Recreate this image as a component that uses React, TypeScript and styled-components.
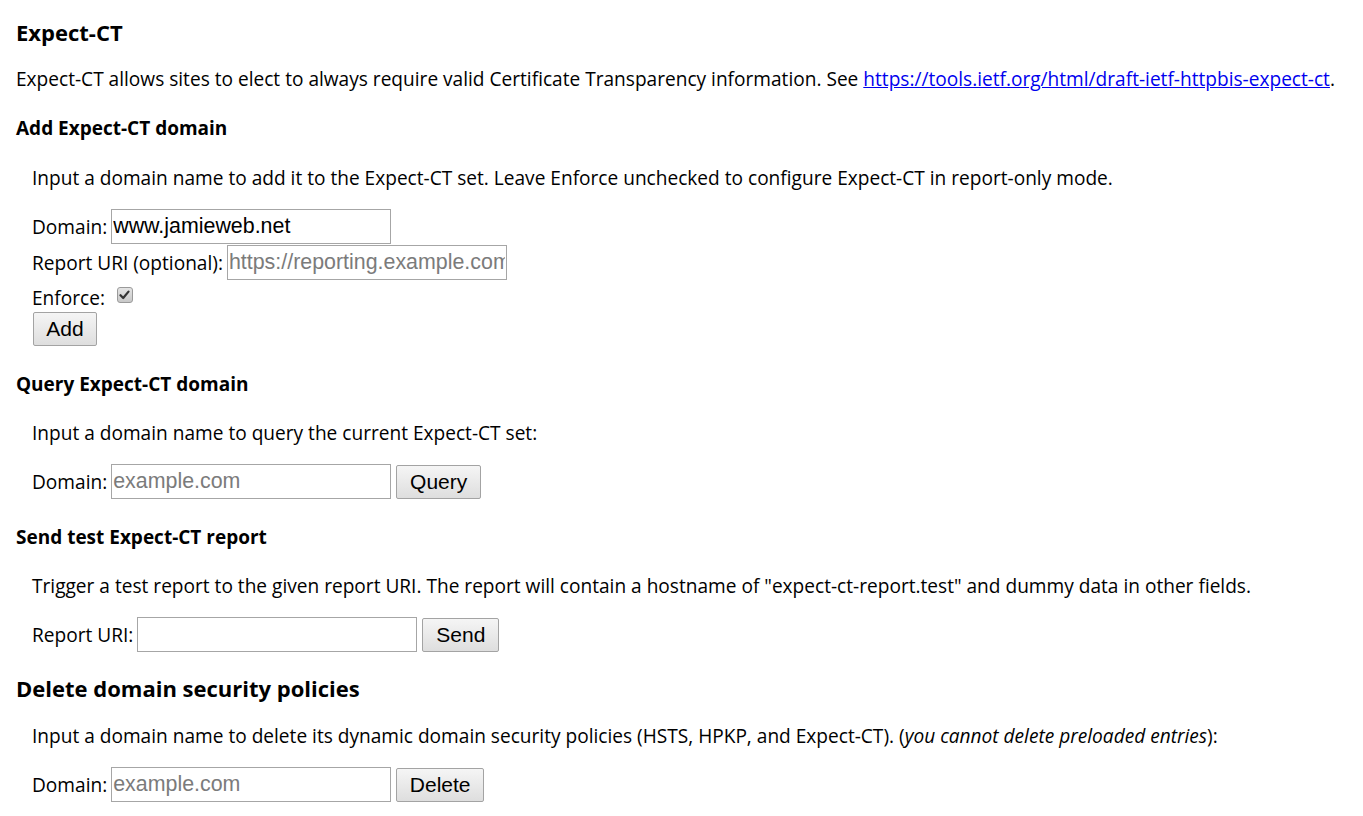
import React from "react";
import styled, { createGlobalStyle } from "styled-components";

const Global = createGlobalStyle`
  html, body { margin: 0; padding: 0; background: #fff; }
  body { font-family: "Open Sans", "Noto Sans", sans-serif; color: #000; }
`;

const Page = styled.div`
  padding: 18px 16px 0 16px;
  display: flex;
  flex-direction: column;
  align-items: flex-start;
`;

const H2 = styled.h2<{ $mt: number }>`
  margin: ${(p) => p.$mt}px 0 0 0;
  font-size: 22px;
  line-height: 28px;
  font-weight: 700;
`;

const H3 = styled.h3<{ $mt: number }>`
  margin: ${(p) => p.$mt}px 0 0 0;
  font-size: 19px;
  line-height: 24px;
  font-weight: 700;
`;

const Para = styled.p<{ $mt: number; $indent?: boolean }>`
  margin: ${(p) => p.$mt}px 0 0 ${(p) => (p.$indent ? 16 : 0)}px;
  font-size: 19.1px;
  line-height: 26px;
  white-space: nowrap;
`;

const Link = styled.a`
  color: #0000ee;
  text-decoration: underline;
`;

const Row = styled.div<{ $mt: number }>`
  margin: ${(p) => p.$mt}px 0 0 16px;
  display: flex;
  align-items: center;
  gap: 4px;
  font-size: 19.1px;
  line-height: 26px;
`;

const Label = styled.span`
  white-space: nowrap;
`;

const TextInput = styled.input`
  box-sizing: border-box;
  width: 280px;
  height: 35px;
  margin: 0;
  padding: 0 1px;
  border: 1px solid #a6a6a6;
  border-radius: 0;
  font-family: "Liberation Sans", Arial, sans-serif;
  font-size: 21.4px;
  color: #000;
  background: #fff;
  outline: none;
  &::placeholder {
    color: #7b7b7b;
  }
`;

const Button = styled.button<{ $w: number }>`
  box-sizing: border-box;
  width: ${(p) => p.$w}px;
  height: 34px;
  margin: 0 0 0 1px;
  padding: 0;
  border: 1px solid #a3a3a3;
  border-radius: 2px;
  background: linear-gradient(#f5f5f5, #dedede);
  font-family: "Liberation Sans", Arial, sans-serif;
  font-size: 21px;
  color: #000;
`;

const CheckRow = styled.div`
  margin: 5px 0 0 16px;
  display: flex;
  align-items: flex-start;
  font-size: 19.1px;
  line-height: 26px;
  height: 26px;
`;

const CheckBox = styled.span`
  box-sizing: border-box;
  margin: 2px 0 0 12px;
  width: 16px;
  height: 16px;
  border: 1px solid #9a9a9a;
  border-radius: 3px;
  background: linear-gradient(#e4e4e4, #c8c8c8);
  display: flex;
  align-items: center;
  justify-content: center;
`;

const ButtonRow = styled.div`
  margin: 1px 0 0 16px;
  display: flex;
`;

export default function App() {
  return (
    <Page>
      <Global />
      <H2 $mt={0}>Expect-CT</H2>
      <Para $mt={20}>
        Expect-CT allows sites to elect to always require valid Certificate Transparency information. See{" "}
        <Link href="#">https://tools.ietf.org/html/draft-ietf-httpbis-expect-ct</Link>.
      </Para>

      <H3 $mt={24}>Add Expect-CT domain</H3>
      <Para $mt={25} $indent>
        Input a domain name to add it to the Expect-CT set. Leave Enforce unchecked to configure Expect-CT in report-only mode.
      </Para>
      <Row $mt={18}>
        <Label>Domain:</Label>
        <TextInput defaultValue="www.jamieweb.net" />
      </Row>
      <Row $mt={1}>
        <Label>Report URI (optional):</Label>
        <TextInput placeholder="https://reporting.example.com" />
      </Row>
      <CheckRow>
        <Label>Enforce:</Label>
        <CheckBox>
          <svg width="11" height="10" viewBox="0 0 11 10">
            <path d="M1.5 5.2 L4.2 8 L9.5 1.6" fill="none" stroke="#333" strokeWidth="2.2" strokeLinecap="round" strokeLinejoin="round" />
          </svg>
        </CheckBox>
      </CheckRow>
      <ButtonRow>
        <Button $w={64}>Add</Button>
      </ButtonRow>

      <H3 $mt={26}>Query Expect-CT domain</H3>
      <Para $mt={24} $indent>
        Input a domain name to query the current Expect-CT set:
      </Para>
      <Row $mt={18}>
        <Label>Domain:</Label>
        <TextInput placeholder="example.com" />
        <Button $w={85}>Query</Button>
      </Row>

      <H3 $mt={26}>Send test Expect-CT report</H3>
      <Para $mt={24} $indent>
        Trigger a test report to the given report URI. The report will contain a hostname of "expect-ct-report.test" and dummy data in other fields.
      </Para>
      <Row $mt={18}>
        <Label>Report URI:</Label>
        <TextInput />
        <Button $w={77}>Send</Button>
      </Row>

      <H2 $mt={22}>Delete domain security policies</H2>
      <Para $mt={21} $indent>
        Input a domain name to delete its dynamic domain security policies (HSTS, HPKP, and Expect-CT). (
        <i>you cannot delete preloaded entries</i>):
      </Para>
      <Row $mt={18}>
        <Label>Domain:</Label>
        <TextInput placeholder="example.com" />
        <Button $w={88}>Delete</Button>
      </Row>
    </Page>
  );
}
